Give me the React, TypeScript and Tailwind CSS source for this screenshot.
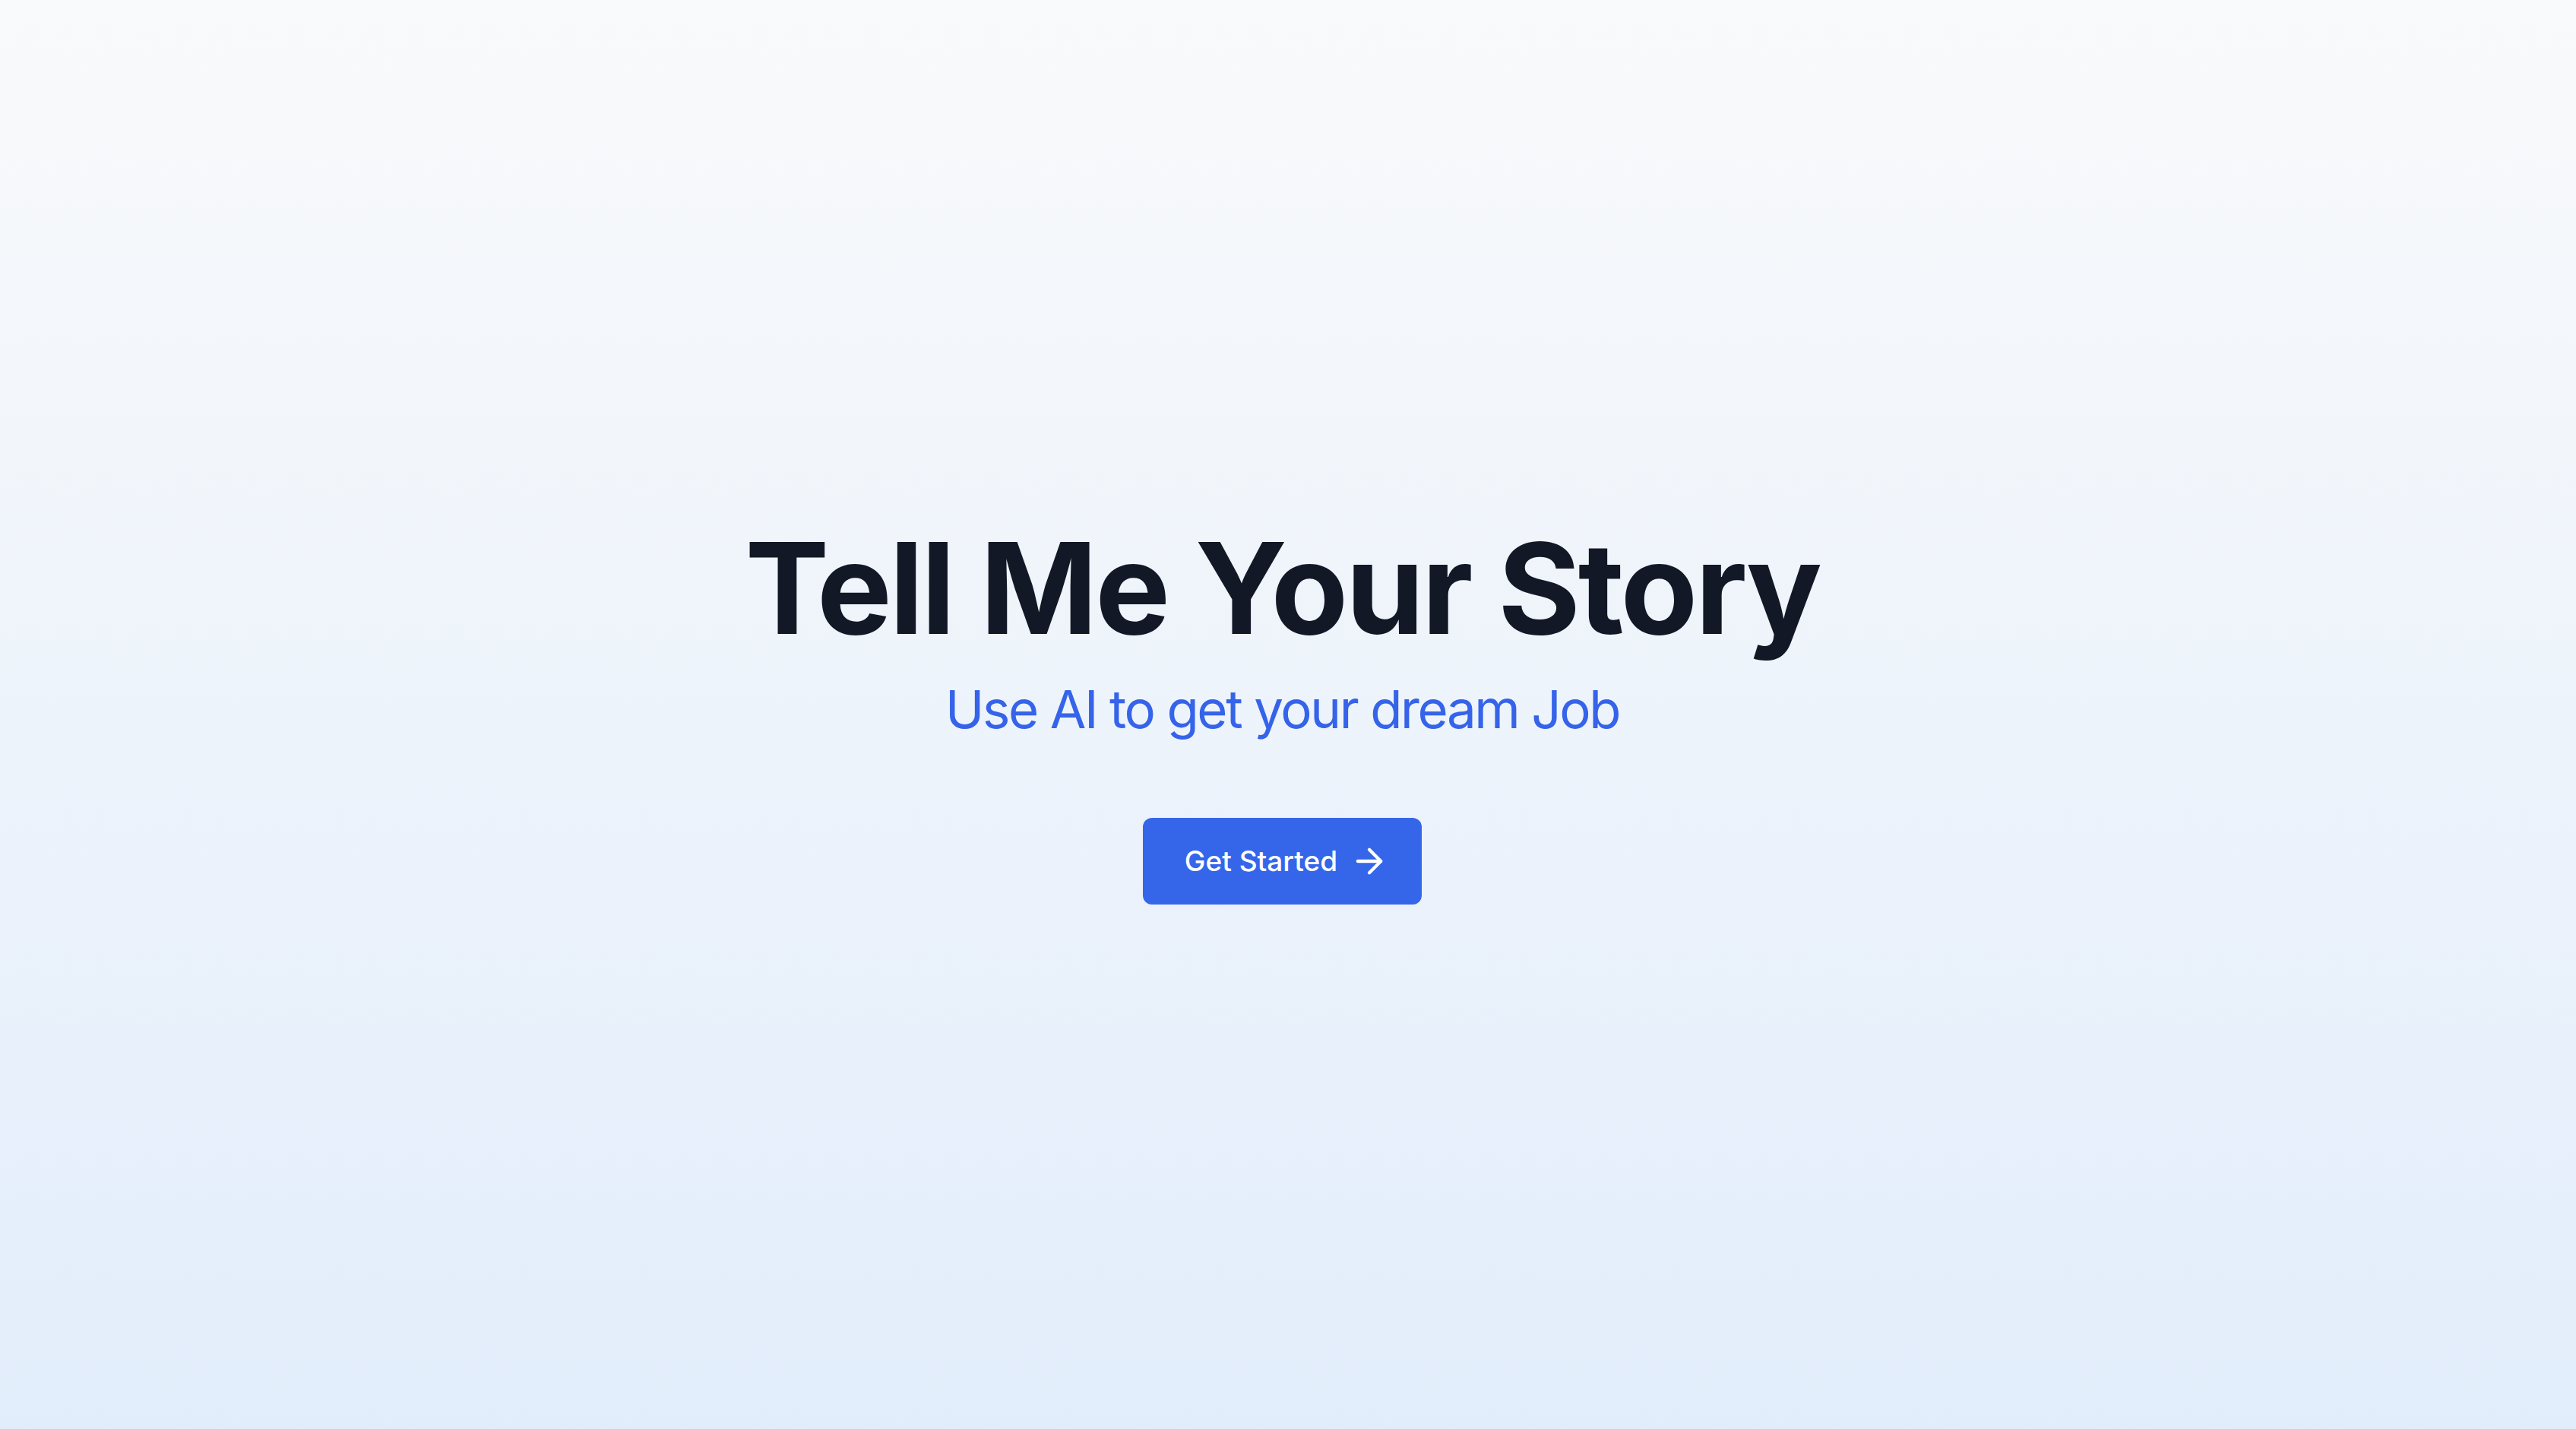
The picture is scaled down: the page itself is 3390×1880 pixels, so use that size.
import { ArrowRight } from "lucide-react";

const App = () => {
  return (
    <div className="min-h-screen w-full bg-gradient-to-b from-[#f9fafb] to-[#e2edfb] font-['Inter',sans-serif] pr-[15px]">
      <div className="flex min-h-screen flex-col items-center justify-center">
        <h1 className="text-[166px] font-bold leading-none tracking-[-0.02em] text-[#131827]">
          Tell Me Your Story
        </h1>
        <p className="mt-[42px] text-[69px] leading-none tracking-[-0.035em] text-[#3563e9]">
          Use AI to get your dream Job
        </p>
        <button className="mt-[108px] flex h-[114px] items-center gap-[16px] rounded-[12px] bg-[#3566ea] pl-[55px] pr-[43px] text-[37px] font-medium text-white">
          Get Started
          <ArrowRight className="h-[52px] w-[52px]" strokeWidth={2} />
        </button>
      </div>
    </div>
  );
};

export default App;
